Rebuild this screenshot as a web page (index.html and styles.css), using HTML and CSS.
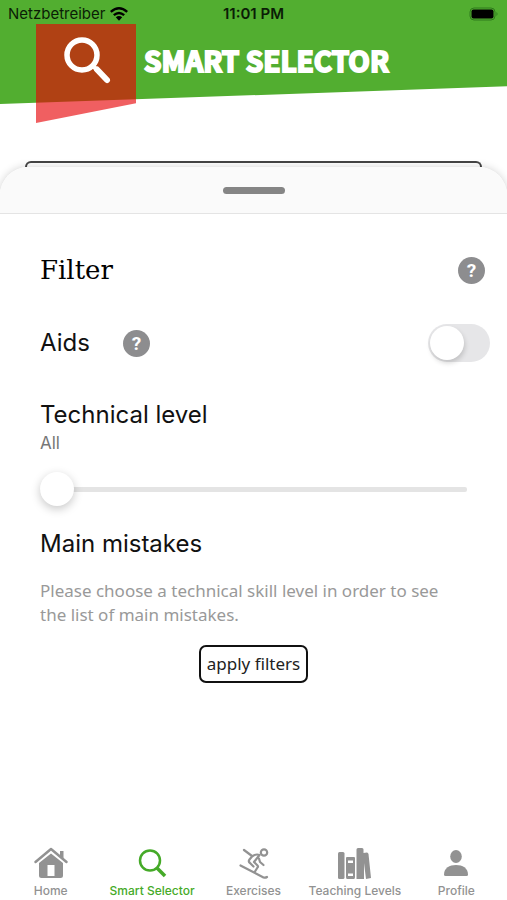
FILE: index.html
```html
<!DOCTYPE html>
<html lang="en">
<head>
<meta charset="utf-8">
<meta name="viewport" content="width=device-width, initial-scale=1">
<title>Smart Selector</title>
<link rel="stylesheet" href="styles.css">
</head>
<body>
<header class="hero">
  <div class="status">
    <span class="carrier">Netzbetreiber
      <svg width="18" height="14" viewBox="0 0 18 14" aria-hidden="true"><g fill="none" stroke="#000" stroke-width="2.4"><path d="M.8 4.9Q9-2.3 17.2 4.9"/><path d="M3.8 8.2Q9 3.8 14.2 8.2"/></g><path d="M5.8 10.3Q9 7.7 12.2 10.3L9 13.7Z"/></svg>
    </span>
    <time class="clock">11:01 PM</time>
    <svg class="battery" width="30" height="14" viewBox="0 0 30 14" aria-hidden="true"><rect x="1" y="1" width="25" height="12" rx="4" fill="none" stroke="#2f7a1c"/><rect x="2.500" y="2.500" width="22" height="9" rx="2"/><path d="M27.500 5v4q2-2 0-4" fill="#2f7a1c"/></svg>
  </div>
  <div class="brand">
    <div class="flag">
      <svg width="48" height="48" viewBox="0 0 48 48" fill="none" stroke="#fff" aria-hidden="true"><circle cx="18" cy="18" r="15" stroke-width="5.500"/><path d="M29 29l5 5" stroke-width="4"/><path d="M33 32.500l10 10.500" stroke-width="6" stroke-linecap="round"/></svg>
    </div>
    <h1>SMART SELECTOR</h1>
  </div>
</header>
<div class="field-edge"></div>
<main class="sheet">
  <div class="grip"><span></span></div>
  <form class="filters">
    <div class="row">
      <h2>Filter</h2>
      <button class="help" type="button" aria-label="Help">?</button>
    </div>
    <div class="row aids">
      <label for="aids">Aids</label>
      <button class="help" type="button" aria-label="About aids">?</button>
      <input class="switch" id="aids" type="checkbox">
    </div>
    <div class="level">
      <label for="level">Technical level</label>
      <output for="level">All</output>
      <input class="slider" id="level" type="range" min="0" max="4" value="0">
    </div>
    <h3>Main mistakes</h3>
    <p>Please choose a technical skill level in order to see the list of main mistakes.</p>
    <button class="apply" type="submit">apply filters</button>
  </form>
  <nav class="tabs">
    <a href="#home"><svg width="36" height="36" viewBox="0 0 36 36" aria-hidden="true"><path d="M2.500 18L18 5l15.500 13" fill="none" stroke="currentColor" stroke-width="2.500" stroke-linecap="round" stroke-linejoin="round"/><path d="M27 7h3.500v8L27 12zM18 9.500L30 19v12.500q0 2.500-2.500 2.500h-19Q6 34 6 31.500V19zM14.500 21v11h7V21z" fill="currentColor" fill-rule="evenodd"/></svg>Home</a>
    <a href="#selector" class="active"><svg width="36" height="36" viewBox="0 0 36 36" fill="none" stroke="currentColor" aria-hidden="true"><circle cx="16" cy="16.500" r="10" stroke-width="2.500"/><path d="M23 24l8 8" stroke-width="3.500"/></svg>Smart Selector</a>
    <a href="#exercises"><svg width="36" height="36" viewBox="0 0 36 36" fill="none" stroke="currentColor" stroke-width="2.200" stroke-linecap="round" stroke-linejoin="round" aria-hidden="true"><circle cx="29" cy="8.500" r="3.200"/><path d="M9 6l8 6M5.500 21.500l23 12q2 .5 3.500-.5M17 12.500q4-3 7.500-1.500l-5.500 7 3.500 3.500q1 1 0 2l-2.500 4M17 12.500l-2.500 3q-1.500 2 .5 3.500l3.500 3.500M24 14.500l1 3.500 3.500 3"/></svg>Exercises</a>
    <a href="#levels"><svg width="36" height="36" viewBox="0 0 36 36" fill="currentColor" aria-hidden="true"><rect x="1" y="8" width="6.500" height="27" rx="1.500"/><path fill-rule="evenodd" d="M10 13h7q1 0 1 1v19q0 2-1 2h-7q-1 0-1-2V14q0-1 1-1m1 3.500v2.500h5v-2.500zm0 13v2.500h5v-2.500z"/><path d="M21 4h4q1.500 0 1.500 1.500V9L30 8.500q1 0 1.500 1.500L34 34l-5 1-2-16v16h-7.500V5.500q0-1.500 1.500-1.500"/></svg>Teaching Levels</a>
    <a href="#profile"><svg width="36" height="36" viewBox="0 0 36 36" fill="currentColor" aria-hidden="true"><ellipse cx="18" cy="12.500" rx="5.800" ry="6.500"/><path d="M6 30.500C6 24 11.500 21 18 21s12 3 12 9.500q0 1.500-1.500 1.500h-21Q6 32 6 30.500"/></svg>Profile</a>
  </nav>
</main>
</body>
</html>
```
FILE: styles.css
```css
* { box-sizing: border-box; }
body {
  margin: 0;
  min-height: 100vh;
  display: flex;
  flex-direction: column;
  background: #fff;
  color: #111;
  font-family: Inter, "Liberation Sans", sans-serif;
}
h1, h2, h3, p { margin: 0; font-weight: 400; }

.hero { position: relative; }
.hero::before {
  content: "";
  position: absolute;
  inset: 0 0 19px;
  z-index: -1;
  background: #52ae30;
  clip-path: polygon(0 0, 100% 0, 100% 83%, 0 100%);
}
.status {
  display: grid;
  grid-template-columns: 1fr auto 1fr;
  align-items: center;
  height: 24px;
  padding: 4px 8px 0;
  font-size: 15px;
  line-height: 20px;
  color: #0b1d06;
}
.carrier { display: flex; align-items: center; gap: 5px; }
.clock { font-weight: 600; }
.battery { justify-self: end; }
.brand { display: flex; gap: 8px; padding-left: 36px; }
.flag {
  width: 100px;
  height: 99px;
  padding: 13px 0 0 28px;
  background: rgba(231, 2, 5, .63);
  clip-path: polygon(0 0, 100% 0, 100% 80%, 0 100%);
}
h1 {
  padding-top: 16px;
  font: 700 28px/40px "Noto Sans CJK JP", "DejaVu Sans Condensed", sans-serif;
  color: #fff;
  -webkit-text-stroke: 2px #fff;
}

.field-edge {
  height: 6px;
  margin: 38px 25px 0;
  border: 2px solid #444;
  border-bottom: 0;
  border-radius: 6px 6px 0 0;
}
.sheet {
  flex: 1;
  display: flex;
  flex-direction: column;
  background: #fff;
  border-radius: 28px 28px 0 0;
  box-shadow: 0 0 8px rgba(0, 0, 0, .18);
}
.grip {
  height: 47px;
  padding-top: 20px;
  background: #fafafa;
  border-bottom: 1px solid #e4e4e4;
  border-radius: 28px 28px 0 0;
}
.grip span {
  display: block;
  width: 62px;
  height: 7px;
  margin: 0 auto;
  border-radius: 4px;
  background: #858585;
}
.filters { flex: 1; display: flex; flex-direction: column; padding: 36px 40px 0; }
.row { display: flex; align-items: center; height: 40px; }
.row:first-child { justify-content: space-between; margin-right: -18px; }
h2 { font: 26px/32px "DejaVu Serif", serif; color: #000; }
.help {
  width: 27px;
  height: 27px;
  padding: 0;
  border: 0;
  border-radius: 50%;
  background: #8d8d8f;
  color: #fff;
  font: 700 19px/27px Roboto, sans-serif;
}
.aids { margin: 33px -23px 0 0; }
.aids .help { margin-left: 33px; }
label, h3 { font-size: 24px; line-height: 32px; }
.switch {
  appearance: none;
  width: 62px;
  height: 38px;
  margin: 0 0 0 auto;
  padding: 2px;
  border-radius: 19px;
  background: #e6e6e8;
}
.switch::before {
  content: "";
  display: block;
  width: 34px;
  height: 34px;
  border-radius: 50%;
  background: #fff;
  box-shadow: 1px 3px 5px rgba(0, 0, 0, .16);
}
.switch:checked { background: #52ae30; }
.switch:checked::before { margin-left: auto; }
.level { display: flex; flex-direction: column; margin-top: 36px; }
output { font-size: 17px; line-height: 24px; color: #777; }
.slider {
  appearance: none;
  width: 100%;
  height: 36px;
  margin: 16px 0 0;
  background: none;
}
.slider::-webkit-slider-runnable-track { height: 5px; border-radius: 2px; background: #e4e4e4; }
.slider::-webkit-slider-thumb {
  appearance: none;
  width: 34px;
  height: 34px;
  margin-top: -15px;
  border-radius: 50%;
  background: #fff;
  box-shadow: 0 3px 10px rgba(0, 0, 0, .22);
}
h3 { margin-top: 21px; }
p { margin-top: 19px; font: 17px/24px "Noto Sans", sans-serif; color: #999; }
.apply {
  align-self: center;
  height: 38px;
  margin-top: 18px;
  padding: 0 6px;
  border: 2px solid #111;
  border-radius: 7px;
  background: #fff;
  color: #222;
  font: 17px/24px "Noto Sans", sans-serif;
}
.tabs { display: grid; grid-template-columns: repeat(5, minmax(0, 1fr)); padding-bottom: 1px; }
.tabs a {
  display: flex;
  flex-direction: column;
  align-items: center;
  color: #929292;
  font-size: 12px;
  font-weight: 500;
  line-height: 16px;
  text-decoration: none;
  white-space: nowrap;
}
.tabs svg { margin-bottom: 3px; }
.tabs .active { color: #45aa28; }
```
